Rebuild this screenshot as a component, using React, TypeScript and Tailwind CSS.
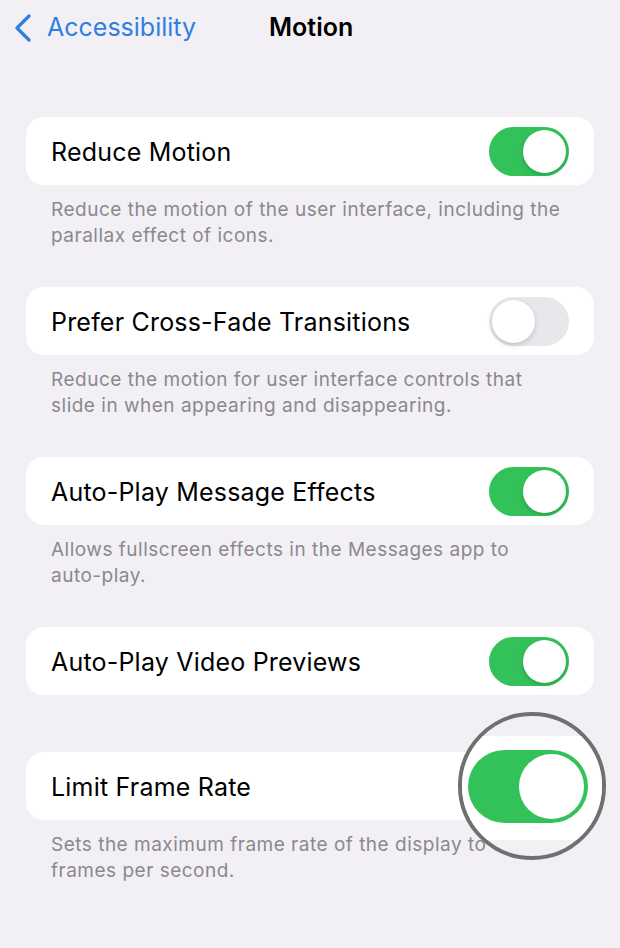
import React from "react";

type Row = { title: string; on: boolean; desc?: string[] };

const rows: Row[] = [
  {
    title: "Reduce Motion",
    on: true,
    desc: ["Reduce the motion of the user interface, including the", "parallax effect of icons."],
  },
  {
    title: "Prefer Cross-Fade Transitions",
    on: false,
    desc: ["Reduce the motion for user interface controls that", "slide in when appearing and disappearing."],
  },
  {
    title: "Auto-Play Message Effects",
    on: true,
    desc: ["Allows fullscreen effects in the Messages app to", "auto-play."],
  },
  { title: "Auto-Play Video Previews", on: true },
];

function Toggle({ on }: { on: boolean }) {
  return (
    <div
      className={
        on
          ? "flex h-[49px] w-[80px] items-center justify-end rounded-full bg-[#33c25a] p-[3px]"
          : "flex h-[49px] w-[80px] items-center justify-start rounded-full bg-[#e8e7ec] p-[3px]"
      }
    >
      <div className="h-[43px] w-[43px] rounded-full bg-white shadow-[0_2px_5px_rgba(0,0,0,0.18)]" />
    </div>
  );
}

function Card({ title, children }: { title: string; children?: React.ReactNode }) {
  return (
    <div className="flex h-[68px] items-center justify-between rounded-[18px] bg-white pl-[25px] pr-[25px]">
      <span className="pt-[3px] text-[25px] tracking-[0.2px] text-black">{title}</span>
      {children}
    </div>
  );
}

function Desc({ lines }: { lines: string[] }) {
  return (
    <div className="px-[25px] pt-[12px] text-[19px] leading-[26px] tracking-[0.5px] text-[#8a898e]">
      {lines.map((l) => (
        <div key={l} className="whitespace-nowrap">
          {l}
        </div>
      ))}
    </div>
  );
}

export default function App() {
  return (
    <div
      className="relative h-[948px] w-[620px] overflow-hidden bg-[#f2f0f5]"
      style={{ fontFamily: "Inter, 'Noto Sans', sans-serif" }}
    >
      {/* nav bar */}
      <div className="flex h-[55px] items-center pl-[13px]">
        <svg width="20" height="28" viewBox="0 0 20 28" className="mr-[14px]">
          <path d="M16 2 L4 14 L16 26" fill="none" stroke="#2f7fe0" strokeWidth="3.2" strokeLinecap="round" strokeLinejoin="round" />
        </svg>
        <span className="text-[25px] text-[#2f7fe0]">Accessibility</span>
        <span className="ml-[73px] text-[25px] font-semibold text-black">Motion</span>
      </div>

      <div className="px-[26px] pt-[62px]">
        {rows.map((r, i) => (
          <div key={r.title} className={i === 0 ? "" : i < 3 ? "mt-[38px]" : "mt-[38px]"}>
            <Card title={r.title}>
              <Toggle on={r.on} />
            </Card>
            {r.desc && <Desc lines={r.desc} />}
          </div>
        ))}
        <div className="mt-[57px]">
          <Card title="Limit Frame Rate" />
          <Desc lines={["Sets the maximum frame rate of the display to 60", "frames per second."]} />
        </div>
      </div>

      {/* magnifier over last toggle */}
      <div className="absolute left-[458px] top-[712px] h-[148px] w-[148px] overflow-hidden rounded-full border-[4px] border-[#707070] bg-[#f2f0f5]">
        <div className="absolute left-0 top-[20px] h-[104px] w-full bg-white" />
        <div className="absolute left-[6px] top-[34px] flex h-[73px] w-[120px] items-center justify-end rounded-full bg-[#33c25a] p-[4px]">
          <div className="h-[65px] w-[65px] rounded-full bg-white" />
        </div>
      </div>
    </div>
  );
}
